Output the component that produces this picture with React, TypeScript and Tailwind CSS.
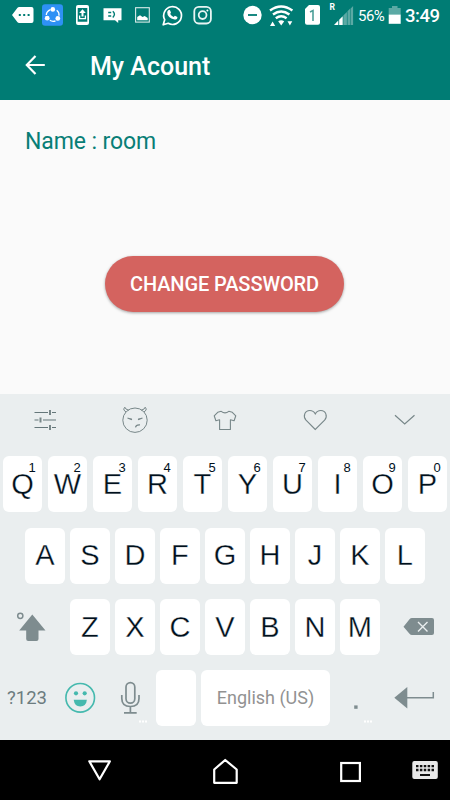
import React from "react";

type GlyphProps = {
  x: number;
  y: number;
  w: number;
  h: number;
  children: React.ReactNode;
};

// A slot of the screen: drawings inside use screen coordinates.
function Glyph({ x, y, w, h, children }: GlyphProps) {
  return (
    <svg
      className="block shrink-0"
      width={w}
      height={h}
      viewBox={`${x} ${y} ${w} ${h}`}
      fill="none"
    >
      {children}
    </svg>
  );
}

function StatusBar() {
  return (
    <div className="flex h-8 items-center text-white">
      <Glyph x={0} y={0} w={38} h={32}>
        <path d="M12 15 L17.3 8 Q18 7 19.3 7 H31.5 Q33.5 7 33.5 9 V21 Q33.5 23 31.5 23 H19.3 Q18 23 17.3 22Z" fill="#fff" />
        <path d="M18.8 14h2v2h-2zM23.2 14h2v2h-2zM27.600 14h2v2h-2z" fill="#007c74" />
      </Glyph>
      <Glyph x={38} y={0} w={32} h={32}>
        <rect x="42" y="4.2" width="21" height="21.5" rx="3" fill="#2e91f5" />
        <path d="M50.5 9.6Q46.4 11.3 46.3 15M56.7 10.2Q59.3 12 59 15.8M49.8 20.3Q52.6 22 55.5 20.8" stroke="#fff" strokeWidth="1.3" />
        <circle cx="52.8" cy="9.4" r="2.3" fill="#fff" />
        <circle cx="47.2" cy="18.2" r="2.4" fill="#fff" />
        <circle cx="57.8" cy="18.4" r="2.4" fill="#fff" />
      </Glyph>
      <Glyph x={70} y={0} w={26} h={32}>
        <path fillRule="evenodd" d="M78 5h9q2 0 2 2v16q0 2-2 2h-9q-2 0-2-2V7q0-2 2-2zM77.7 8v13.8h9.6V8z" fill="#fff" />
        <path d="M82.5 9.3l3.3 3.7h-2.3v3.6h-2V13h-2.3z" fill="#fff" />
        <path d="M79.6 15.5v3.2h5.8v-3.2" stroke="#fff" strokeWidth="1.3" />
      </Glyph>
      <Glyph x={96} y={0} w={32} h={32}>
        <path d="M103.5 8.2H121.5V20.3H118.2V23L115 20.3H103.5Z" fill="#fff" />
        <path d="M108.2 12.6h3M108.2 16h3" stroke="#007c74" strokeWidth="1.5" />
        <path d="M112.8 11.2q3.3 2.9 0 6.2" stroke="#007c74" strokeWidth="1.4" />
      </Glyph>
      <Glyph x={128} y={0} w={28} h={32}>
        <rect x="135.6" y="7.7" width="13.7" height="14.4" stroke="#d9ebe9" strokeWidth="1.1" />
        <path d="M137.2 20.3v-3.3l2.8-1.8 2.6 1.8 2.1-1 3 1.9v2.4z" fill="#fff" />
      </Glyph>
      <Glyph x={156} y={0} w={32} h={32}>
        <path d="M163.2 24.8l1.5-5.1a8.9 8.9 0 1 1 3.5 3.6z" stroke="#fff" strokeWidth="1.7" strokeLinejoin="round" />
        <path d="M168.3 10.2q.9-.8 1.7 0l1 2.3-.8 1.5q1.2 2.2 3.4 3.1l1.3-1.4 2.5 1.2q.2 2.6-2.8 2.6-7.4-1.8-7.4-7.3 .3-1.3 1.1-2z" fill="#fff" />
      </Glyph>
      <Glyph x={188} y={0} w={50} h={32}>
        <rect x="194.3" y="6.8" width="16.6" height="16.7" rx="4.5" stroke="#e8f4f3" strokeWidth="1.8" />
        <circle cx="202.6" cy="15.1" r="3.9" stroke="#e8f4f3" strokeWidth="1.8" />
        <circle cx="207.4" cy="10.4" r="1" fill="#fff" />
      </Glyph>
      <Glyph x={238} y={0} w={28} h={32}>
        <circle cx="252.5" cy="15" r="9.2" fill="#fff" />
        <path d="M248 15h9" stroke="#007c74" strokeWidth="1.8" />
      </Glyph>
      <Glyph x={266} y={0} w={34} h={32}>
        <path d="M270 10.5q11.2-8 22.4 0M273 14.5q8.2-6.2 16.4 0M275.8 18.2q5.4-4 10.8 0" stroke="#fff" strokeWidth="2.4" />
        <path d="M278.2 21.3q3-2.2 6 0l-3 4.3z" fill="#fff" />
        <path d="M270 26l2.6-4.5 2.6 4.5zM287.5 21.3h4.8l-2.4 4.3z" fill="#fff" />
      </Glyph>
      <Glyph x={300} y={0} w={28} h={32}>
        <path d="M305 9l4-4h9q2 0 2 2v15.8q0 2-2 2h-11q-2 0-2-2z" fill="#fff" />
        <path d="M310 12l3-1.4V21" stroke="#4d9f99" strokeWidth="1.6" />
      </Glyph>
      <Glyph x={328} y={0} w={30} h={32}>
        <text x="329.5" y="10" fill="#fff" fontFamily="Roboto, sans-serif" fontSize="8.5" fontWeight="700">R</text>
        <path d="M334 25l4.3-4.5V25zM339.2 25v-5.3l3.5-3.4V25z" fill="#fff" />
        <path d="M343.3 25v-9.5l3.6-3.6V25zM347.5 25V11.2l2.7-2.7V25zM350.7 25V8.4l2.4-2.4V25z" fill="#5ba9a4" />
      </Glyph>
      <span className="w-[30px] shrink-0 text-[15px] leading-8 tracking-[-0.5px] whitespace-nowrap">56%</span>
      <Glyph x={388} y={0} w={17} h={32}>
        <path d="M388.7 8h3.3V6h5.5v2h3.2v6.5h-12z" fill="#5ba9a4" />
        <path d="M388.7 14.5h12v9.3h-12z" fill="#fff" />
      </Glyph>
      <span className="shrink-0 text-[18.5px] leading-8 font-medium tracking-[-0.5px]">3:49</span>
    </div>
  );
}

// The white outline on the letter trims its strokes to a light weight.
function Key({ label, digit }: { label: string; digit?: string }) {
  return (
    <div className="relative flex h-14 w-[39.5px] shrink-0 items-center justify-center rounded-[6px] bg-white font-['Liberation_Sans',sans-serif] text-[29px] leading-none text-[#00101c]">
      <span className="[-webkit-text-stroke:0.3px_white]">{label}</span>
      {digit && <span className="absolute top-[4.5px] right-[6.5px] text-[13px] leading-[14px]">{digit}</span>}
    </div>
  );
}

function Toolbar() {
  return (
    <div className="flex h-[62px]">
      <Glyph x={0} y={394} w={90} h={62}>
        <path d="M34.5 412.5H48M52 412.5h4M34.5 420h4M43 420h13M34.5 427.5H48M52 427.5h4" stroke="#65777a" strokeWidth="1.1" />
        <path d="M50 410v5M40.5 417.5v5M50 425v5" stroke="#788789" strokeWidth="2" />
      </Glyph>
      <Glyph x={90} y={394} w={90} h={62}>
        <g stroke="#788789" strokeWidth="1">
          <circle cx="135" cy="420.2" r="12.2" />
          <path d="M126 412l-2-1.8q-.8-1 .8-3 .5 2.3 4 3M144 412l2-1.8q.8-1-.8-3-.5 2.3-4 3" />
          <path d="M127.5 418l4.5 1.6M142.5 418l-4.5 1.6M135.5 427.3q.5-2.8 4.5-2.4" strokeWidth="1.2" />
        </g>
        <path d="M128.5 418.5h3.2v1.2zM141.5 418.5h-3.2v1.2z" fill="#788789" />
      </Glyph>
      <Glyph x={180} y={394} w={90} h={62}>
        <path d="M221.2 411.3q3.8 3.2 7.6 0l3.5 1 3.5 3.5-1.7 5-3.7-1V429.5h-10.8V419.8l-3.7 1-1.7-5 3.5-3.5z" stroke="#788789" strokeWidth="1.1" strokeLinejoin="round" />
      </Glyph>
      <Glyph x={270} y={394} w={90} h={62}>
        <path d="M315.3 429.5l-9.3-9.3c-3.4-4-1.2-9.7 3.8-9.7q3.7 0 5.5 3.4 1.8-3.4 5.5-3.4c5 0 7.2 5.7 3.8 9.7z" stroke="#788789" strokeWidth="1.1" />
      </Glyph>
      <Glyph x={360} y={394} w={90} h={62}>
        <path d="M395 415.3l9.7 8.7 9.8-8.7" stroke="#788789" strokeWidth="1.2" />
      </Glyph>
    </div>
  );
}

function Keyboard() {
  return (
    <div className="flex h-[346px] flex-col bg-[#eaeeef]">
      <Toolbar />
      <div className="flex h-[71.5px] gap-[5.5px] pt-[0.3px] pl-[2.7px]">
        {"QWERTYUIOP".split("").map((k, i) => (
          <Key key={k} label={k} digit={String((i + 1) % 10)} />
        ))}
      </div>
      <div className="flex h-[71.5px] gap-[5.5px] pl-[25.2px]">
        {"ASDFGHJKL".split("").map((k) => (
          <Key key={k} label={k} />
        ))}
      </div>
      <div className="flex h-[71px] gap-[5.5px]">
        <Glyph x={0} y={599} w={64.7} h={56}>
          <circle cx="20.3" cy="615.8" r="2.6" stroke="#7e8c8f" strokeWidth="1.5" />
          <path d="M32.3 614.6l13.2 15.9h-7v8.4q0 2-2 2h-8.3q-2 0-2-2v-8.4h-7z" fill="#7e8c8f" />
        </Glyph>
        {"ZXCVBNM".split("").map((k) => (
          <Key key={k} label={k} />
        ))}
        <Glyph x={385} y={599} w={65} h={56}>
          <path d="M403.5 626.7l6-7.5q1-1.2 2.5-1.2h20q2 0 2 2v13q0 2-2 2h-20q-1.5 0-2.5-1.2z" fill="#7e8c8f" />
          <path d="M418 622l9.5 9.5M427.5 622l-9.5 9.5" stroke="#eaeeef" strokeWidth="1.4" />
        </Glyph>
      </div>
      <div className="flex h-14 items-center">
        <div className="w-[60px] pt-[2px] pl-[7px] text-[18.5px] text-[#6c7c7f]">?123</div>
        <Glyph x={60} y={670} w={96} h={56}>
          <circle cx="80.2" cy="697.8" r="14.3" stroke="#45b9ae" strokeWidth="1.6" />
          <circle cx="76" cy="693.3" r="2.1" fill="#45b9ae" />
          <circle cx="84.7" cy="693.3" r="2.1" fill="#45b9ae" />
          <path d="M73.7 699.8h13.2q-.8 6.7-6.6 6.7t-6.6-6.7z" fill="#45b9ae" />
          <rect x="126" y="682.6" width="8.8" height="20.5" rx="4.4" stroke="#7e8c8f" strokeWidth="1.7" />
          <path d="M121.8 695v3.5q0 8 8.6 8t8.6-8V695M130.4 706.5v6.3M124 712.8h12.7" stroke="#7e8c8f" strokeWidth="1.7" />
          <path d="M139 720.5h2v2h-2zM142 720.5h2v2h-2zM145 720.5h2v2h-2z" fill="#fff" />
        </Glyph>
        <div className="h-14 w-[39.5px] rounded-[6px] bg-white" />
        <div className="ml-[5.5px] flex h-14 w-[129px] items-center justify-center rounded-[6px] bg-white pb-px text-[18px] text-[#929292]">
          English (US)
        </div>
        <Glyph x={330} y={670} w={120} h={56}>
          <path d="M354.2 705.4h3.4v3.4h-3.4z" fill="#7e8c8f" />
          <path d="M364 720.5h2v2h-2zM367 720.5h2v2h-2zM370 720.5h2v2h-2z" fill="#fff" />
          <path d="M394.3 697.7L407.3 687v21.5z" fill="#7e8c8f" />
          <path d="M406 697.7h27.3V692" stroke="#7e8c8f" strokeWidth="1.5" />
        </Glyph>
      </div>
    </div>
  );
}

function NavigationBar() {
  return (
    <div className="flex h-[60px] bg-black">
      <Glyph x={0} y={740} w={160} h={60}>
        <path d="M89.3 761.3h20.6l-10.3 18z" stroke="#fff" strokeWidth="2.2" strokeLinejoin="round" />
      </Glyph>
      <Glyph x={160} y={740} w={130} h={60}>
        <path d="M214.2 782.8V769.5l11-9.5 11.5 9.5v13.3z" stroke="#fff" strokeWidth="2.2" strokeLinejoin="round" />
      </Glyph>
      <Glyph x={290} y={740} w={110} h={60}>
        <rect x="341.2" y="763" width="18.7" height="18" stroke="#fff" strokeWidth="2.2" />
      </Glyph>
      <Glyph x={400} y={740} w={50} h={60}>
        <rect x="412.3" y="761" width="25.5" height="18" rx="2" fill="#e8e8e8" />
        <path d="M416 766.2h18M416 770h18" stroke="#111" strokeWidth="2.3" strokeDasharray="2.5 1.38" />
        <path d="M420 775h10" stroke="#111" strokeWidth="2" />
      </Glyph>
    </div>
  );
}

export default function App() {
  return (
    <div className="flex h-[800px] w-[450px] flex-col overflow-hidden bg-[#fafafa] font-[Roboto,sans-serif]">
      <header className="h-[100px] bg-[#007c74]">
        <StatusBar />
        <div className="flex h-[68px] items-center">
          <Glyph x={0} y={32} w={90} h={68}>
            <path d="M44.8 65H27M35.5 56L26.8 65l8.7 9" stroke="#fff" strokeWidth="2.2" />
          </Glyph>
          <h1 className="pt-0.5 text-[25px] leading-8 font-medium text-white">My Acount</h1>
        </div>
      </header>
      <main className="flex h-[294px] flex-col">
        <p className="mt-[26px] ml-[25px] text-[23px] leading-8 tracking-[-0.1px] text-[#087e76]">Name : room</p>
        <button className="mt-[97.5px] ml-[105px] h-14 w-[239px] rounded-full bg-[#d4635f] pt-px text-[20px] font-medium tracking-[-0.1px] whitespace-nowrap text-white shadow-[0_1px_3px_rgba(0,0,0,0.35)]">
          CHANGE PASSWORD
        </button>
      </main>
      <Keyboard />
      <NavigationBar />
    </div>
  );
}
